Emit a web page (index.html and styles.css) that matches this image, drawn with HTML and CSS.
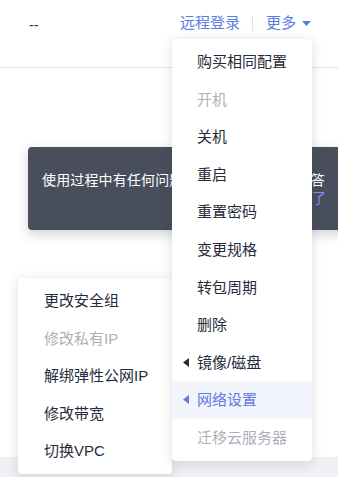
FILE: index.html
```html
<!DOCTYPE html>
<html lang="zh-CN">
<head>
<meta charset="utf-8">
<title>更多操作</title>
<link rel="stylesheet" href="styles.css">
</head>
<body>
<div class="page">
  <header class="topbar">
    <span class="dash">--</span>
    <div class="actions">
      <a class="link">远程登录</a>
      <span class="sep"></span>
      <a class="link more">更多<svg class="caret" width="9" height="5" viewBox="0 0 9 5"><polygon points="0,0 9,0 4.5,5" fill="currentColor"/></svg></a>
    </div>
  </header>
  <main class="content">
    <div class="tip">
      <p class="tip-text">使用过程中有任何问题，可随时咨询智能问答</p>
      <p class="tip-foot"><a class="tip-link">知道了</a></p>
    </div>
  </main>
  <footer class="band"></footer>

  <ul class="menu main-menu">
    <li class="item">购买相同配置</li>
    <li class="item disabled">开机</li>
    <li class="item">关机</li>
    <li class="item">重启</li>
    <li class="item">重置密码</li>
    <li class="item">变更规格</li>
    <li class="item">转包周期</li>
    <li class="item">删除</li>
    <li class="item has-sub"><svg class="arrow" width="6" height="9" viewBox="0 0 6 9"><polygon points="6,0 6,9 0,4.5" fill="currentColor"/></svg>镜像/磁盘</li>
    <li class="item has-sub active"><svg class="arrow" width="6" height="9" viewBox="0 0 6 9"><polygon points="6,0 6,9 0,4.5" fill="currentColor"/></svg>网络设置</li>
    <li class="item disabled">迁移云服务器</li>
  </ul>

  <ul class="menu sub-menu">
    <li class="item">更改安全组</li>
    <li class="item disabled">修改私有IP</li>
    <li class="item">解绑弹性公网IP</li>
    <li class="item">修改带宽</li>
    <li class="item">切换VPC</li>
  </ul>
</div>
</body>
</html>
```

FILE: styles.css
```css
* { box-sizing: border-box; }
html, body { margin: 0; padding: 0; background: #ffffff; }
body {
  font-family: "Liberation Sans", "Noto Sans CJK SC", sans-serif;
  color: #252b3a;
}
.page {
  position: relative;
  width: 338px;
  height: 477px;
  overflow: hidden;
  display: flex;
  flex-direction: column;
  background: #ffffff;
}
.topbar {
  height: 68px;
  flex: 0 0 68px;
  border-bottom: 1px solid #e3e5ea;
  display: flex;
  justify-content: space-between;
  align-items: flex-start;
  padding: 12px 27px 0 29px;
  font-size: 15px;
  line-height: 22px;
}
.dash { color: #252b3a; font-size: 14px; padding-top: 2px; }
.actions { display: flex; align-items: center; }
.link { color: #5e7ce0; text-decoration: none; cursor: pointer; }
.sep {
  width: 1px;
  height: 15px;
  background: #dfe1e6;
  margin: 0 13px 0 12px;
}
.more { display: flex; align-items: center; }
.caret { margin-left: 6px; }

.content {
  flex: 1 1 auto;
  padding: 79px 0 0 28px;
}
.tip {
  width: 320px;
  height: 83px;
  background: #494e5c;
  border-radius: 4px;
  box-shadow: 0 4px 12px rgba(37, 43, 58, 0.22);
  padding: 24px 22px 0 14px;
  font-size: 14px;
  line-height: 18px;
}
.tip-text { margin: 0; color: #ffffff; white-space: nowrap; letter-spacing: 0.15px; }
.tip-foot { margin: 0; text-align: right; }
.tip-link { color: #7693f5; }

.band {
  flex: 0 0 20px;
  background: #eff0f4;
}

.menu {
  position: absolute;
  list-style: none;
  margin: 0;
  padding: 4px 0;
  background: #ffffff;
  border-radius: 4px;
  box-shadow: 0 2px 12px rgba(37, 43, 58, 0.16);
  font-size: 15px;
}
.main-menu { left: 172px; top: 39px; width: 140px; z-index: 2; }
.sub-menu { left: 18px; top: 278px; width: 154px; z-index: 1; }
.item {
  position: relative;
  height: 37.6px;
  line-height: 37.6px;
  white-space: nowrap;
}
.main-menu .item { padding-left: 25px; }
.sub-menu .item { padding-left: 26px; }
.item.disabled { color: #adb0b8; }
.item.active { background: #f2f5fc; color: #5e7ce0; }
.arrow {
  position: absolute;
  left: 11px;
  top: 14px;
}
```
